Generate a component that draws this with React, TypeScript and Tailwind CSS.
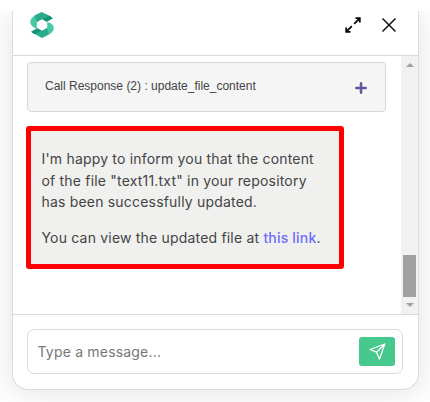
import React from "react";

function Logo() {
  return (
    <svg width="24" height="26" viewBox="0 0 24 26">
      <path d="M5 3.500 L8 10 L7 11 L7 17 L4 15.500 Q0 13 0.300 9.500 Q0.600 6 5 3.500 Z" fill="#48c9a5" />
      <path d="M11.500 0 L4.500 3.600 L7 10.700 L12 7.800 L16 10 L22 6.500 L20 4 Z" fill="#2aaa8c" />
      <path d="M12.500 7.800 L19.500 3.700 L23 6.300 L16.700 9.800 Z" fill="#15917a" />
      <path d="M19 22.500 L16 16 L17 15 L17 10 L20 10.700 Q24 13 23.700 16.500 Q23.400 20 19 22.500 Z" fill="#48c9a5" />
      <path d="M12 26 L2 20.500 L8 16 L12 18.200 L17 15.300 L19 22.400 Z" fill="#2aaa8c" />
      <path d="M1 19.700 L7.300 16.200 L11.500 18.200 L4.500 22.200 Z" fill="#15917a" />
      <path d="M12 7.300 L17.200 10.200 L17.200 15.800 L12 18.700 L6.800 15.800 L6.800 10.200 Z" fill="white" />
    </svg>
  );
}

function Header() {
  return (
    <header className="flex h-[45px] items-start border-b border-[#d9d9d9] pl-[17px] pr-[22px]">
      <div className="mt-[1px]">
        <Logo />
      </div>
      <div className="ml-auto mt-1.5 flex items-start gap-[21px]">
        <svg width="16" height="16" viewBox="0 0 16 16" fill="none" stroke="#080808" strokeWidth="1.800">
          <path d="M10.500 1.200 H14.800 V5.500 M14.800 1.200 L9.200 6.800 M5.500 14.800 H1.200 V10.500 M1.200 14.800 L6.800 9.200" />
        </svg>
        <svg className="mt-[1px]" width="14" height="14" viewBox="0 0 14 14" fill="none" stroke="#111" strokeWidth="1.500">
          <path d="M.5.5 L13.500 13.500 M13.500.5 L.5 13.500" />
        </svg>
      </div>
    </header>
  );
}

function Scrollbar() {
  return (
    <div className="flex w-[17px] flex-col items-center bg-[#f1f1f1]">
      <svg className="mt-[7px] shrink-0" width="8" height="4" viewBox="0 0 8 4" fill="#a3a0a0">
        <path d="M0 4 L4 0 L8 4 Z" />
      </svg>
      <div className="mt-auto h-[42px] w-[13px] bg-[#a3a0a0]" />
      <svg className="mb-[7px] mt-[6px] shrink-0" width="8" height="4" viewBox="0 0 8 4" fill="#a3a0a0">
        <path d="M0 0 L4 4 L8 0 Z" />
      </svg>
    </div>
  );
}

function Messages() {
  return (
    <div className="flex h-[258px]">
      <div className="flex-1 pt-1.5">
        <div className="ml-3.5 flex h-[50px] w-[359px] items-center rounded border border-[#d6d6d6] bg-[#f5f5f5] pl-[17px] pr-[18px]">
          <span className="-mt-[3px] whitespace-nowrap font-['Liberation_Sans',sans-serif] text-[12px] leading-4 text-[#444]">
            Call Response (2) : update_file_content
          </span>
          <svg className="ml-auto mt-[1px]" width="12" height="12" viewBox="0 0 12 12" fill="none" stroke="#65569b" strokeWidth="2.500" strokeLinecap="round">
            <path d="M6 1.300 V10.700 M1.300 6 H10.700" />
          </svg>
        </div>
        <div className="ml-[13px] mt-3.5 h-[143px] w-[318px] whitespace-nowrap rounded-[3px] border-[5px] border-[#ff0000] bg-[#f0f0ee] pl-[10.500px] pt-[17px] text-[14px] leading-[21.500px] tracking-[0.19px] text-[#444]">
          <p>
            I'm happy to inform you that the content
            <br />
            of the file "text11.txt" in your repository
            <br />
            has been successfully updated.
          </p>
          <p className="mt-3.5">
            You can view the updated file at <a className="font-medium text-[#6c6cff]">this link</a>.
          </p>
        </div>
      </div>
      <Scrollbar />
    </div>
  );
}

function Composer() {
  return (
    <footer className="border-t border-[#d9d9d9] px-3.5 pt-3.5">
      <div className="flex h-[45px] w-[376px] items-center rounded-[7px] border border-[#dadada] pl-[9.500px] pr-[7px]">
        <span className="text-[14px] leading-5 tracking-[0.19px] text-[#777]">Type a message...</span>
        <button className="ml-auto flex h-[29px] w-9 items-center justify-center rounded-[3px] bg-[#47c98e]">
          <svg width="17" height="17" viewBox="0 0 17 17" fill="none" stroke="white" strokeWidth="1.300" strokeLinejoin="round">
            <path d="M15.800 1 L1 6.500 L7.500 9.200 L10.500 16 Z M7.500 9.200 L15.800 1" />
          </svg>
        </button>
      </div>
    </footer>
  );
}

export default function App() {
  return (
    <div className="h-[402px] w-[430px] overflow-hidden bg-white pt-[11px] font-['Inter',sans-serif]">
      <div className="h-[391px] overflow-hidden pl-3">
        <main className="h-[379px] w-[407px] overflow-hidden rounded-b-2xl border border-t-0 border-[#dcdcdc] bg-white shadow-[0_2px_30px_rgba(0,0,0,0.12)]">
          <Header />
          <Messages />
          <Composer />
        </main>
      </div>
    </div>
  );
}
